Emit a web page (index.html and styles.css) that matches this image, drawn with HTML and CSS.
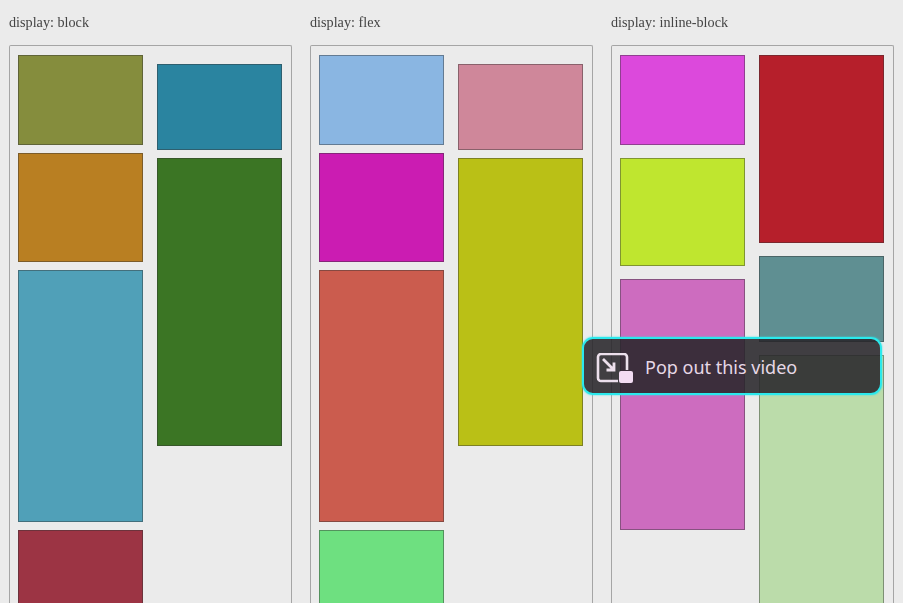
FILE: index.html
```html
<!DOCTYPE html>
<html lang="en">
<head>
    <meta charset="UTF-8">
    <title>Masonry display comparison</title>
    <link rel="stylesheet" href="styles.css">
</head>
<body>
    <div class="page">
        <section class="panel">
            <p class="panel-label">display: block</p>
            <div class="panel-box">
                <div class="col">
                    <div class="card h-90 olive"></div>
                    <div class="card h-109 orange"></div>
                    <div class="card h-252 sky"></div>
                    <div class="card card-cut wine"></div>
                </div>
                <div class="col col-down">
                    <div class="card h-86 teal"></div>
                    <div class="card h-288 forest"></div>
                </div>
            </div>
        </section>

        <section class="panel">
            <p class="panel-label">display: flex</p>
            <div class="panel-box">
                <div class="col">
                    <div class="card h-90 blue"></div>
                    <div class="card h-109 magenta"></div>
                    <div class="card h-252 coral"></div>
                    <div class="card card-cut mint"></div>
                </div>
                <div class="col col-down">
                    <div class="card h-86 rose"></div>
                    <div class="card h-288 mustard"></div>
                </div>
            </div>
        </section>

        <section class="panel">
            <p class="panel-label">display: inline-block</p>
            <div class="panel-box">
                <div class="col col-wide">
                    <div class="card h-90 pink"></div>
                    <div class="card h-108 lime"></div>
                    <div class="card h-251 orchid"></div>
                </div>
                <div class="col col-wide">
                    <div class="card h-188 red"></div>
                    <div class="card h-86 slate"></div>
                    <div class="card card-cut sage"></div>
                </div>
            </div>
        </section>
    </div>

    <div class="pip-toggle">
        <svg class="pip-icon" width="38" height="32" viewBox="0 0 38 32" fill="none">
            <path d="M22 28H5a3 3 0 0 1-3-3V4a3 3 0 0 1 3-3h23a3 3 0 0 1 3 3v13" stroke="#ece0ec" stroke-width="2.6"/>
            <path d="M7 6l11 11M18 9.5V17H10.5" stroke="#ece0ec" stroke-width="2.8"/>
            <rect x="23" y="18" width="14" height="12" rx="2" fill="#f3dcf3"/>
        </svg>
        <span class="pip-text">Pop out this video</span>
    </div>
</body>
</html>
```

FILE: styles.css
```css
body {
    margin: 0;
    background-color: #ebebeb;
}

.page {
    display: flex;
    gap: 18px;
    height: 603px;
    box-sizing: border-box;
    padding-left: 9px;
    overflow: hidden;
    filter: blur(0.6px);
}

.panel {
    display: flex;
    flex-direction: column;
    width: 283px;
}

.panel-label {
    margin: 0;
    height: 45px;
    padding-top: 14px;
    box-sizing: border-box;
    font-family: "Liberation Serif", serif;
    font-size: 14.2px;
    line-height: 16px;
    color: #444;
}

/* runs off the bottom of the frame, so no bottom edge */
.panel-box {
    flex: 1;
    display: flex;
    justify-content: space-between;
    min-height: 0;
    padding: 9px 9px 0 8px;
    border: 1.5px solid #a5a5a5;
    border-bottom: 0;
    border-radius: 2px 2px 0 0;
}

.col {
    display: flex;
    flex-direction: column;
    gap: 8px;
    width: 125px;
}

.col-down {
    padding-top: 9px;
}

.col-wide {
    gap: 13px;
}

.card {
    box-sizing: border-box;
    border: 1px solid rgba(50, 50, 50, 0.45);
}

.card-cut {
    flex: 1;
    border-bottom: 0;
}

.h-86 { height: 86px; }
.h-90 { height: 90px; }
.h-108 { height: 108px; }
.h-109 { height: 109px; }
.h-188 { height: 188px; }
.h-251 { height: 251px; }
.h-252 { height: 252px; }
.h-288 { height: 288px; }

.olive { background-color: #858d3d; }
.orange { background-color: #b97f22; }
.sky { background-color: #50a0b8; }
.wine { background-color: #9c3444; }
.teal { background-color: #2a84a0; }
.forest { background-color: #3b7524; }

.blue { background-color: #8ab6e2; }
.magenta { background-color: #cb1cb2; }
.coral { background-color: #cb5c4e; }
.mint { background-color: #6ee080; }
.rose { background-color: #cf879a; }
.mustard { background-color: #bac016; }

.pink { background-color: #dc49dc; }
.lime { background-color: #bfe62f; }
.orchid { background-color: #cd6cbf; }
.red { background-color: #b61f2b; }
.slate { background-color: #5f8f92; }
.sage { background-color: #bbdcaa; }

/* sits over the page like the browser's own control */
.pip-toggle {
    position: absolute;
    left: 582px;
    top: 337px;
    box-sizing: border-box;
    width: 300px;
    height: 58px;
    display: flex;
    align-items: center;
    gap: 11px;
    padding: 2px 0 0 12px;
    background-color: rgba(40, 38, 42, 0.88);
    border: 2.5px solid #2be9ec;
    border-radius: 11px;
    box-shadow: 0 0 2px #2be9ec;
}

.pip-icon {
    margin-top: 4px;
}

.pip-text {
    font-family: "Noto Sans", sans-serif;
    font-size: 18px;
    color: #e6d8e6;
}
```
